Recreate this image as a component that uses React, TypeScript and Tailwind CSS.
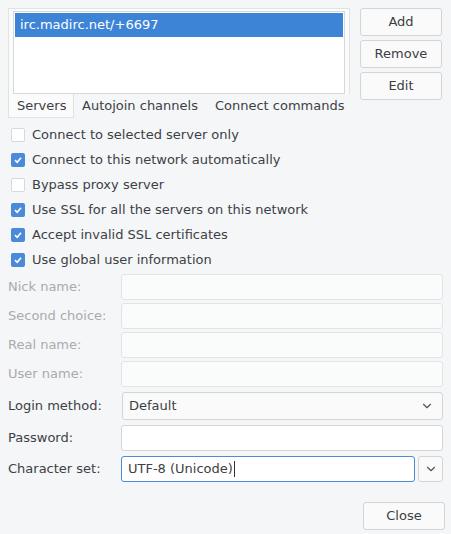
import { ChevronDown } from 'lucide-react';

const font = { fontFamily: '"DejaVu Sans", sans-serif' };

function Btn({ label, className = '' }: { label: string; className?: string }) {
  return (
    <button
      className={`flex h-[28px] w-[82px] items-center justify-center rounded-[3px] border border-[#d3d5d7] bg-[#fafafa] text-[13px] text-[#3b3e42] ${className}`}
    >
      {label}
    </button>
  );
}

function Check({ checked, label }: { checked: boolean; label: string }) {
  return (
    <div className="flex h-[25px] items-center gap-[7px] pl-[11px]">
      {checked ? (
        <span className="flex h-[14px] w-[14px] items-center justify-center rounded-[2px] bg-[#4a8ad9]">
          <svg width="10" height="10" viewBox="0 0 10 10">
            <path d="M2 5.2 L4.2 7.3 L8 2.8" fill="none" stroke="white" strokeWidth="1.7" />
          </svg>
        </span>
      ) : (
        <span className="h-[14px] w-[14px] rounded-[2px] border border-[#d6d8da] bg-white" />
      )}
      <span className="whitespace-nowrap text-[13px] text-[#3d4046]">{label}</span>
    </div>
  );
}

function Field({ label, disabled }: { label: string; disabled?: boolean }) {
  return (
    <div className="flex h-[29px] items-center">
      <span
        className={`w-[121px] shrink-0 whitespace-nowrap pl-[8px] text-[13px] ${disabled ? 'text-[#a9abad]' : 'text-[#3d4046]'}`}
      >
        {label}
      </span>
      <div
        className={`h-[26px] flex-1 rounded-[3px] border ${disabled ? 'border-[#e3e4e5] bg-[#fafbfb]' : 'border-[#d3d5d7] bg-white'}`}
      />
    </div>
  );
}

export default function App() {
  return (
    <div className="h-[534px] w-[451px] bg-[#f5f6f7] text-[#3d4046]" style={font}>
      <div className="flex gap-[10px] pl-[8px] pr-[9px] pt-[8px]">
        <div className="flex w-[342px] flex-col">
          <div className="h-[86px] border border-b-0 border-[#e1e2e3] bg-[#fbfbfb] px-[4px] pt-[2px]">
            <div className="h-[83px] border border-[#d6d8da] bg-white p-[1px]">
              <div className="flex h-[24px] items-center bg-[#3d84d6] pl-[5px] text-[13px] text-white">
                irc.madirc.net/+6697
              </div>
            </div>
          </div>
          <div className="flex h-[24px] items-center whitespace-nowrap text-[13px] text-[#3d4046]">
            <div className="flex h-full w-[66px] shrink-0 items-center border border-t-0 border-[#e1e2e3] bg-[#fbfbfb] pl-[8px] pt-[1px]">
              Servers
            </div>
            <div className="pl-[8px]">Autojoin channels</div>
            <div className="pl-[17px]">Connect commands</div>
          </div>
        </div>
        <div className="flex flex-col gap-[4px]">
          <Btn label="Add" />
          <Btn label="Remove" />
          <Btn label="Edit" />
        </div>
      </div>

      <div className="mt-[4px]">
        <Check checked={false} label="Connect to selected server only" />
        <Check checked label="Connect to this network automatically" />
        <Check checked={false} label="Bypass proxy server" />
        <Check checked label="Use SSL for all the servers on this network" />
        <Check checked label="Accept invalid SSL certificates" />
        <Check checked label="Use global user information" />
      </div>

      <div className="pr-[8px]">
        <Field label="Nick name:" disabled />
        <Field label="Second choice:" disabled />
        <Field label="Real name:" disabled />
        <Field label="User name:" disabled />

        <div className="mt-[3px] flex h-[29px] items-center">
          <span className="w-[122px] shrink-0 pl-[8px] text-[13px]">Login method:</span>
          <div className="flex h-[28px] flex-1 items-center justify-between rounded-[3px] border border-[#d3d5d7] bg-[#fafafa] pl-[6px] pr-[8px] text-[13px]">
            <span>Default</span>
            <ChevronDown size={14} strokeWidth={2} className="text-[#555]" />
          </div>
        </div>

        <div className="mt-[3px] flex h-[29px] items-center">
          <span className="w-[121px] shrink-0 pl-[8px] text-[13px]">Password:</span>
          <div className="h-[26px] flex-1 rounded-[3px] border border-[#d3d5d7] bg-white" />
        </div>

        <div className="mt-[2px] flex h-[29px] items-center">
          <span className="w-[121px] shrink-0 pl-[8px] text-[13px]">Character set:</span>
          <div className="flex h-[26px] flex-1 items-center rounded-[3px] border border-[#4a8ad9] bg-white pl-[6px] text-[13px]">
            UTF-8 (Unicode)<span className="ml-[1px] h-[16px] w-px bg-[#333]" />
          </div>
          <div className="ml-[3px] flex h-[26px] w-[25px] shrink-0 items-center justify-center rounded-[3px] border border-[#d3d5d7] bg-[#fafafa]">
            <ChevronDown size={14} strokeWidth={2} className="text-[#555]" />
          </div>
        </div>
      </div>

      <div className="mt-[19px] flex justify-end pr-[6px]">
        <Btn label="Close" />
      </div>
    </div>
  );
}
